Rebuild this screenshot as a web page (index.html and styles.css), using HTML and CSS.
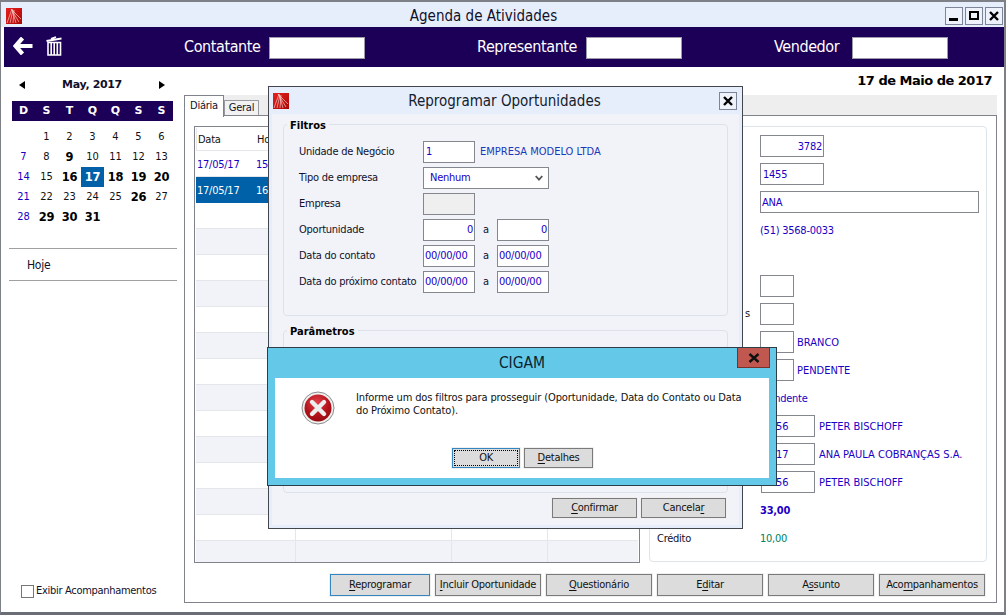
FILE: index.html
```html
<!DOCTYPE html>
<html lang="pt">
<head>
<meta charset="utf-8">
<title>Agenda de Atividades</title>
<link rel="stylesheet" href="styles.css">
</head>
<body>
<svg width="0" height="0" class="defs">
  <defs>
    <linearGradient id="logoG" x1="0" y1="0" x2="1" y2="1"><stop offset="0" stop-color="#e8201c"/><stop offset="1" stop-color="#a80808"/></linearGradient>
    <radialGradient id="errG" cx="0.45" cy="0.3" r="0.8"><stop offset="0" stop-color="#e2404a"/><stop offset="0.6" stop-color="#b01018"/><stop offset="1" stop-color="#8a0c10"/></radialGradient>
    <symbol id="logo" viewBox="0 0 16 16">
      <rect width="16" height="16" fill="url(#logoG)"/>
      <path d="M1 15 6 1M4 15 7 2M7 15 8 2M10 15 6 1M13 14 5 1M15 11 5 1" stroke="#f6c8c4" stroke-width=".7" fill="none"/>
    </symbol>
  </defs>
</svg>
<div class="window">
  <header class="titlebar">
    <svg class="logo"><use href="#logo"/></svg>
    <span class="title-text">Agenda de Atividades</span>
    <div class="winbtns">
      <span class="winbtn"><svg width="16" height="16" viewBox="0 0 16 16"><rect x="3" y="10" width="9" height="3" fill="#000"/></svg></span>
      <span class="winbtn"><svg width="16" height="16" viewBox="0 0 16 16"><rect x="4" y="4" width="8" height="7" fill="none" stroke="#000" stroke-width="2"/></svg></span>
      <span class="winbtn"><svg width="16" height="16" viewBox="0 0 16 16"><path d="M4 4 12 12M12 4 4 12" stroke="#000" stroke-width="2.4"/></svg></span>
    </div>
  </header>
  <div class="toolbar">
    <svg class="tool-back" width="20" height="18" viewBox="0 0 20 18"><path d="M9.5 1 2.5 9 9.5 17M3 9H19.5" fill="none" stroke="#fff" stroke-width="4.2"/></svg>
    <svg class="tool-trash" width="16" height="21" viewBox="0 0 16 21"><path d="M.5 6 15.5 3.5M5 3.8 10 2" stroke="#fff" stroke-width="1.8" fill="none"/><path d="M2 7.5H14.5V20H2ZM5.2 8V20M8.2 8V20M11.3 8V20" stroke="#fff" stroke-width="1.6" fill="none"/></svg>
    <span class="tool-label first">Contatante</span><span class="tool-input"></span>
    <span class="tool-label second">Representante</span><span class="tool-input"></span>
    <span class="tool-label third">Vendedor</span><span class="tool-input"></span>
  </div>
  <div class="body">
    <aside class="sidebar">
      <div class="cal-head">
        <span class="arrow-l"></span><b>May, 2017</b><span class="arrow-r"></span>
      </div>
      <div class="cal-week"><span>D</span><span>S</span><span>T</span><span>Q</span><span>Q</span><span>S</span><span>S</span></div>
      <div class="cal-days">
        <span></span><span>1</span><span>2</span><span>3</span><span>4</span><span>5</span><span>6</span>
        <span class="sun">7</span><span>8</span><span class="bd">9</span><span>10</span><span>11</span><span>12</span><span>13</span>
        <span class="sun">14</span><span>15</span><span class="bd">16</span><span class="today">17</span><span class="bd">18</span><span class="bd">19</span><span class="bd">20</span>
        <span class="sun">21</span><span>22</span><span>23</span><span>24</span><span>25</span><span class="bd">26</span><span>27</span>
        <span class="sun">28</span><span class="bd">29</span><span class="bd">30</span><span class="bd">31</span>
      </div>
      <div class="hoje">Hoje</div>
      <label class="check"><span class="checkbox"></span>Exibir Acompanhamentos</label>
    </aside>
    <main class="content">
      <div class="date-line">17 de Maio de 2017</div>
      <div class="tabs">
        <span class="tab active">Diária</span><span class="tab">Geral</span>
      </div>
      <div class="pane">
        <div class="pane-top">
          <div class="grid">
            <div class="row head"><span class="c1">Data</span><span class="c2">Hora</span></div>
            <div class="row"><span class="c1 val">17/05/17</span><span class="c2 val">15:00</span></div>
            <div class="row sel"><span class="c1">17/05/17</span><span class="c2">16:00</span></div>
            <div class="row"></div>
            <div class="row alt"></div><div class="row"></div><div class="row alt"></div><div class="row"></div>
            <div class="row alt"></div><div class="row"></div><div class="row alt"></div><div class="row"></div>
            <div class="row alt"></div><div class="row"></div><div class="row alt"></div>
            <div class="row lined"><i></i><i></i><i></i></div>
            <div class="row alt lined last"><i></i><i></i><i></i></div>
          </div>
          <section class="detail">
            <div class="f-row"><span class="box w64 right val">3782</span></div>
            <div class="f-row"><span class="box w64 val">1455</span></div>
            <div class="f-row"><span class="box w219 val tight">ANA</span></div>
            <div class="f-row"><span class="val">(51) 3568-0033</span></div>
            <div class="f-row"></div>
            <div class="f-row"><span class="box w34"></span></div>
            <div class="f-row"><span class="box w34"></span><span class="side-s">s</span></div>
            <div class="f-row"><span class="box w34"></span><span class="val after">BRANCO</span></div>
            <div class="f-row"><span class="box w34"></span><span class="val after">PENDENTE</span></div>
            <div class="f-row"><span class="val indent">Pendente</span></div>
            <div class="f-row"><span class="box w54 val">3356</span><span class="val after">PETER BISCHOFF</span></div>
            <div class="f-row"><span class="box w54 val">3317</span><span class="val after">ANA PAULA COBRANÇAS S.A.</span></div>
            <div class="f-row"><span class="box w54 val">3356</span><span class="val after">PETER BISCHOFF</span></div>
            <div class="f-row"><b class="val">33,00</b></div>
            <div class="f-row credit"><span class="f-label">Crédito</span><span class="green">10,00</span></div>
          </section>
        </div>
        <div class="actions">
          <button class="btn focus w100"><u>R</u>eprogramar</button>
          <button class="btn w106"><u>I</u>ncluir Oportunidade</button>
          <button class="btn w106"><u>Q</u>uestionário</button>
          <button class="btn w106">E<u>d</u>itar</button>
          <button class="btn w106">A<u>s</u>sunto</button>
          <button class="btn w106">Aco<u>m</u>panhamentos</button>
        </div>
      </div>
    </main>
  </div>

  <section class="dialog">
    <header class="dlg-title">
      <svg class="logo"><use href="#logo"/></svg>
      <span class="dlg-title-text">Reprogramar Oportunidades</span>
      <span class="winbtn"><svg width="16" height="16" viewBox="0 0 16 16"><path d="M4 4 12 12M12 4 4 12" stroke="#000" stroke-width="2.4"/></svg></span>
    </header>
    <div class="dlg-body">
      <fieldset class="group filtros">
        <legend>Filtros</legend>
        <div class="d-row"><span class="d-label">Unidade de Negócio</span><span class="box w52 val">1</span><span class="val firm">EMPRESA MODELO LTDA</span></div>
        <div class="d-row"><span class="d-label">Tipo de empresa</span><span class="box select val">Nenhum<svg width="8" height="6" viewBox="0 0 8 6"><path d="M.7 1 4 4.6 7.3 1" fill="none" stroke="#555" stroke-width="1.8"/></svg></span></div>
        <div class="d-row"><span class="d-label">Empresa</span><span class="box w52 off"></span></div>
        <div class="d-row"><span class="d-label">Oportunidade</span><span class="box w52 right val">0</span><span class="to">a</span><span class="box w52 right val">0</span></div>
        <div class="d-row"><span class="d-label">Data do contato</span><span class="box w52 val tight">00/00/00</span><span class="to">a</span><span class="box w52 val tight">00/00/00</span></div>
        <div class="d-row"><span class="d-label">Data do próximo contato</span><span class="box w52 val tight">00/00/00</span><span class="to">a</span><span class="box w52 val tight">00/00/00</span></div>
      </fieldset>
      <fieldset class="group params">
        <legend>Parâmetros</legend>
      </fieldset>
      <div class="dlg-actions">
        <button class="btn short w85"><u>C</u>onfirmar</button>
        <button class="btn short w85">Cancela<u>r</u></button>
      </div>
    </div>
  </section>

  <section class="alert">
    <header class="alert-title">CIGAM<span class="alert-close"><svg width="16" height="16" viewBox="0 0 16 16"><path d="M3.5 4 12.5 12M12.5 4 3.5 12" stroke="#111" stroke-width="2.4"/></svg></span></header>
    <div class="alert-body">
      <div class="alert-msg">
        <svg class="err" width="34" height="34" viewBox="0 0 34 34">
          <circle cx="17" cy="17" r="16" fill="#f0f0f0" stroke="#8c8c8c" stroke-width="1"/>
          <circle cx="17" cy="17" r="13.5" fill="url(#errG)"/>
          <path d="M11 11 23 23M23 11 11 23" stroke="#eee" stroke-width="4.4" stroke-linecap="round"/>
        </svg>
        <p>Informe um dos filtros para prosseguir (Oportunidade, Data do Contato ou Data do Próximo Contato).</p>
      </div>
      <div class="alert-actions">
        <button class="btn short focus dotted w68">OK</button>
        <button class="btn short w69"><u>D</u>etalhes</button>
      </div>
    </div>
  </section>
</div>
</body>
</html>
```
FILE: styles.css
```css
* { box-sizing: border-box; }
html, body { margin: 0; padding: 0; }
body { width: 1006px; height: 615px; overflow: hidden; background: #fff; font: 11px/14px "DejaVu Sans Condensed", "DejaVu Sans", sans-serif; font-stretch: condensed; letter-spacing: -.25px; color: #10102a; }
.defs { position: absolute; }
.window { position: relative; width: 1006px; height: 615px; border: 2px solid #7d8087; border-left-width: 1px; border-right-width: 2px; border-bottom: 3px solid #6a6d76; background: #fff; display: flex; flex-direction: column; overflow: hidden; }
.val { color: #1a00c4; }
.logo { width: 16px; height: 16px; flex: none; }

.titlebar { height: 25px; background: #e6eefc; display: flex; align-items: center; padding: 3px 1px 0 5px; position: relative; flex: none; }
.title-text { position: absolute; left: 0; right: 38px; text-align: center; font-size: 15px; letter-spacing: 0; }
.winbtns { margin-left: auto; display: flex; gap: 2px; }
.winbtn { width: 18px; height: 18px; border: 1px solid #7d8698; background: #eef2fa; display: inline-flex; align-items: center; justify-content: center; }

.toolbar { height: 40px; background: #1c0058; color: #fff; margin-left: 3px; display: flex; align-items: center; flex: none; font-size: 16px; letter-spacing: -.4px; padding-left: 9px; }
.tool-back { flex: none; margin-top: -2px; }
.tool-trash { flex: none; margin-left: 13px; margin-top: -3px; }
.tool-label { white-space: nowrap; }
.tool-label.first { margin-left: 122px; width: 85px; }
.tool-label.second { margin-left: 112px; width: 109px; }
.tool-label.third { margin-left: 92px; width: 78px; }
.tool-input { width: 96px; height: 22px; margin-top: 2px; background: #fff; border: 1px solid #9a9aa8; }

.body { flex: 1; display: flex; min-height: 0; }
.sidebar { width: 183px; flex: none; position: relative; padding: 0 4px 0 11px; display: flex; flex-direction: column; }
.cal-head { height: 34px; display: flex; align-items: center; justify-content: space-between; padding: 2px 8px 0 7px; width: 161px; font-size: 11px; font-family: "DejaVu Sans", sans-serif; font-stretch: normal; }
.cal-head b { font-weight: 700; letter-spacing: -.35px; }
.arrow-l { width: 0; height: 0; border: 4px solid transparent; border-left: 0; border-right: 6px solid #000; }
.arrow-r { width: 0; height: 0; border: 4px solid transparent; border-right: 0; border-left: 6px solid #000; }
.cal-week { width: 161px; height: 20px; background: #1c0058; color: #fff; display: grid; grid-template-columns: repeat(7, 23px); align-items: center; text-align: center; font: 700 11px/20px "DejaVu Sans", sans-serif; letter-spacing: 0; }
.cal-days { width: 161px; margin-top: 6px; display: grid; grid-template-columns: repeat(7, 23px); grid-auto-rows: 20px; text-align: center; line-height: 20px; font-size: 11px; letter-spacing: 0; color: #111; }
.cal-days .sun { color: #1a00c4; }
.cal-days .bd { font-weight: 700; font-family: "DejaVu Sans", sans-serif; font-stretch: normal; font-size: 11.5px; letter-spacing: -.2px; color: #000; }
.cal-days .today { background: #0060a8; color: #fff; font-weight: 700; font-family: "DejaVu Sans", sans-serif; font-stretch: normal; font-size: 11.5px; letter-spacing: -.2px; }
.hoje { margin: 21px 0 0 -3px; height: 33px; border-top: 1px solid #a0a0a0; border-bottom: 1px solid #a0a0a0; padding: 9px 0 0 18px; font-size: 12px; width: 168px; }
.check { margin-top: auto; margin-bottom: 14px; margin-left: 9px; display: flex; align-items: center; font-size: 11px; letter-spacing: -.3px; gap: 2px; white-space: nowrap; }
.checkbox { width: 13px; height: 13px; border: 1px solid #777; background: #fff; flex: none; }

.content { flex: 1; min-width: 0; display: flex; flex-direction: column; position: relative; }
.date-line { height: 28px; text-align: right; padding: 6px 12px 0 0; font: 700 13px/16px "DejaVu Sans", sans-serif; letter-spacing: -.5px; color: #000; flex: none; }
.tabs { height: 20px; background: #eee; display: flex; align-items: flex-end; flex: none; margin-right: 7px; position: relative; }
.tab { height: 15px; width: 35px; border: 1px solid #9a9aa2; border-bottom: 0; background: #f2f2f2; text-align: center; font-size: 11px; line-height: 14px; }
.tab.active { height: 22px; width: 40px; background: #fff; border-color: #80838c; position: relative; z-index: 1; margin-bottom: -2px; line-height: 20px; border-bottom: 0; }
.pane { flex: 1; border: 1px solid #80838c; margin: 0 7px 9px 0; display: flex; flex-direction: column; padding: 10px 9px 0 9px; min-height: 0; }
.pane-top { display: flex; gap: 9px; height: 437px; flex: none; }
.grid { width: 446px; height: 437px; flex: none; border: 1px solid #80838c; padding: 1px; overflow: hidden; }
.row { height: 26px; display: flex; align-items: center; padding-top: 2px; border-bottom: 1px solid #e4e6ea; position: relative; }
.row.head { height: 23px; background: #fff; border-bottom: 1px solid #e4e6ea; border-left: 1px solid #e8e8e8; color: #111; }
.row.sel { background: #0060a8; color: #fff; border-bottom: 0; }
.row.alt { background: #f1f3f8; }
.row.last { height: 22px; border-bottom: 0; }
.c1 { width: 60px; padding-left: 1px; }
.lined i { position: absolute; top: 0; bottom: 0; width: 1px; background: #e4e6ea; }
.lined i:nth-child(1) { left: 99px; }
.lined i:nth-child(2) { left: 255px; }
.lined i:nth-child(3) { left: 351px; }

.detail { width: 338px; height: 436px; flex: none; border: 1px solid #dde4ea; border-radius: 4px; padding: 5px 0 0 110px; position: relative; }
.f-row { height: 28px; display: flex; align-items: center; position: relative; }
.f-row > span:not(.box), .f-row > b { padding-top: 2px; }
.box { height: 22px; border: 1px solid #85878e; background: #fff; display: inline-flex; align-items: center; padding: 0 2px; flex: none; font-size: 11px; white-space: nowrap; }
.detail .box { padding-top: 1px; }
.box.right { justify-content: flex-end; padding-right: 1px; }
.box.tight { padding-left: 1px; }
.w64 { width: 64px; } .w219 { width: 219px; } .w34 { width: 34px; } .w54 { width: 54px; margin-left: 1px; } .w52 { width: 52px; }
.after { margin-left: 3px; font-size: 11px; letter-spacing: 0; }
.box.w54 + .after { margin-left: 4px; }
.indent { margin-left: 3px; }
.side-s { position: absolute; left: -15px; top: 5px; }
.f-label { position: absolute; left: -103px; }
.green { color: #008060; }

.actions { display: flex; gap: 5px; padding: 11px 0 0 136px; }
.btn { height: 22px; padding: 0; border: 1px solid #7a7a7a; background: #dcdcdc; box-shadow: 0 0 0 1px #f0f0f0; color: #111; font: 11px/18px "DejaVu Sans Condensed", "DejaVu Sans", sans-serif; font-stretch: condensed; letter-spacing: -.27px; white-space: nowrap; }
.btn.short { height: 20px; }
.btn u { text-decoration-thickness: 1px; text-underline-offset: 2px; }
.btn.focus { border-color: #3484c0; }
.btn.dotted { outline: 1px dotted #000; outline-offset: -3px; }
.w100 { width: 100px; } .w106 { width: 106px; } .w85 { width: 85px; } .w68 { width: 68px; } .w69 { width: 69px; }

.dialog { position: absolute; left: 267px; top: 84px; width: 475px; height: 443px; border: 1px solid #44464e; background: #f1f3f9; display: flex; flex-direction: column; }
.dlg-title { height: 27px; background: #e6eefc; display: flex; align-items: center; padding: 0 5px 0 4px; position: relative; flex: none; }
.dlg-title .winbtn { margin-left: auto; }
.dlg-title-text { position: absolute; left: -2px; right: 0; text-align: center; font-size: 15px; letter-spacing: 0; color: #14202c; }
.dlg-body { flex: 1; display: flex; flex-direction: column; position: relative; border: 3px solid #e6eefc; border-top: 0; padding: 0 11px; }
.group { margin: 1px 0 0; padding: 0 0 0 15px; border: 1px solid #dde2ea; border-radius: 4px; min-width: 0; }
.group legend { font-weight: 700; padding: 4px 3px 0; margin-left: -12px; color: #000; font-size: 11px; letter-spacing: 0; }
.filtros { height: 201px; }
.params { height: 172px; margin-top: 5px; }
.d-row { height: 26px; display: flex; align-items: center; }
.d-row:first-of-type { margin-top: 6px; }
.d-label { width: 124px; flex: none; white-space: nowrap; }
.firm { margin-left: 5px; font-size: 11px; letter-spacing: 0; color: #1a38b8; }
.select { width: 126px; justify-content: space-between; padding: 0 5px 0 6px; }
.off { background: #efefef; }
.to { width: 22px; text-align: center; }
.dlg-actions { display: flex; justify-content: flex-end; gap: 4px; margin-top: auto; margin-bottom: 7px; padding-right: 2px; }

.alert { position: absolute; left: 266px; top: 345px; width: 510px; height: 139px; border: 1px solid #2c3e48; background: #64c9e9; display: flex; flex-direction: column; padding: 0 7px 7px; }
.alert-title { height: 30px; flex: none; text-align: center; font-size: 15.5px; letter-spacing: 0; line-height: 30px; color: #0c2430; position: relative; }
.alert-close { position: absolute; right: -1px; top: 0; width: 33px; height: 20px; background: #c0584f; border: 1px solid #75332c; border-top: 0; display: flex; align-items: center; justify-content: center; }
.alert-body { flex: 1; background: #fff; display: flex; flex-direction: column; padding: 13px 12px 10px 26px; }
.alert-msg { display: flex; gap: 21px; }
.err { flex: none; }
.alert-msg p { margin: 0; width: 400px; line-height: 13px; letter-spacing: -.12px; color: #111; }
.alert-actions { margin-top: auto; display: flex; gap: 4px; padding-left: 151px; }
```
